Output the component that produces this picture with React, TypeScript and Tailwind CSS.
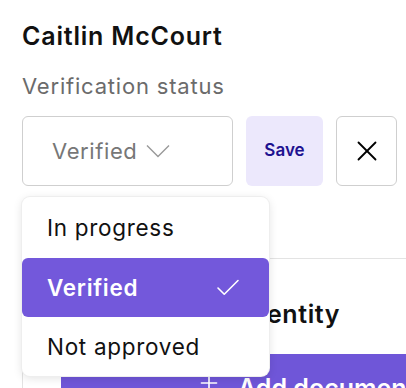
import React, { useState } from 'react';
import { X, Check, Plus } from 'lucide-react';

const options = ['In progress', 'Verified', 'Not approved'];

const App = () => {
  const [status, setStatus] = useState('Verified');

  return (
    <div
      className="relative w-[406px] h-[388px] overflow-hidden bg-white px-[22px] pt-[21px]"
      style={{ fontFamily: 'Inter, "Noto Sans", sans-serif' }}
    >
      <h1 className="text-[25px] leading-[30px] font-semibold tracking-[0.8px] text-[#111]">Caitlin McCourt</h1>
      <p className="mt-[21px] text-[22px] leading-[28px] tracking-[0.8px] text-[#6b6b6b]">Verification status</p>

      {/* Status controls */}
      <div className="mt-[16px] flex gap-[13px]">
        <button className="flex h-[70px] w-[211px] shrink-0 items-center gap-[9px] rounded-[6px] border border-[#cfcfcf] pl-[29px] text-[22px] tracking-[0.6px] text-[#777]">
          {status}
          <svg width="24" height="14" viewBox="0 0 24 14" fill="none" stroke="#999" strokeWidth="1.4">
            <path d="M1 1.5 12 12.5 23 1.5" />
          </svg>
        </button>
        <button className="h-[70px] w-[77px] shrink-0 rounded-[6px] bg-[#ece8fc] text-[17px] font-semibold text-[#1d1190]">
          Save
        </button>
        <button className="flex h-[70px] w-[61px] shrink-0 items-center justify-center rounded-[6px] border border-[#cfcfcf]">
          <X className="h-[34px] w-[34px] text-black" strokeWidth={1.3} />
        </button>
      </div>

      {/* Document card behind the menu */}
      <div className="mt-[72px] w-[420px] rounded-t-[8px] border border-[#e3e3e3] pl-[38px] pt-[40px]">
        <h2 className="pl-[10px] text-[25px] leading-[30px] font-semibold tracking-[0.6px] text-[#111]">Proof of your identity</h2>
        <button className="mt-[25px] flex h-[60px] w-[400px] items-start gap-[16px] rounded-[4px] bg-[#6f56d8] pl-[135px] pt-[16px] text-[25px] font-semibold text-white">
          <Plus className="h-[26px] w-[26px]" strokeWidth={1.5} />
          Add document
        </button>
      </div>

      {/* Open dropdown */}
      <div className="absolute left-[22px] top-[197px] w-[247px] rounded-[8px] bg-white shadow-[0_2px_10px_rgba(0,0,0,0.12)] ring-1 ring-[#eeeeee]">
        {options.map((opt, i) => (
          <div
            key={opt}
            onClick={() => setStatus(opt)}
            className={`flex items-center justify-between rounded-[6px] pl-[25px] pr-[26px] text-[22.5px] tracking-[0.7px] ${
              i === 0 ? 'h-[61px]' : 'h-[59px]'
            } ${opt === status ? 'bg-[#7358db] font-semibold text-white' : 'text-[#111]'}`}
          >
            {opt}
            {opt === status && <Check className="h-[30px] w-[30px]" strokeWidth={1.3} />}
          </div>
        ))}
      </div>
    </div>
  );
};

export default App;
